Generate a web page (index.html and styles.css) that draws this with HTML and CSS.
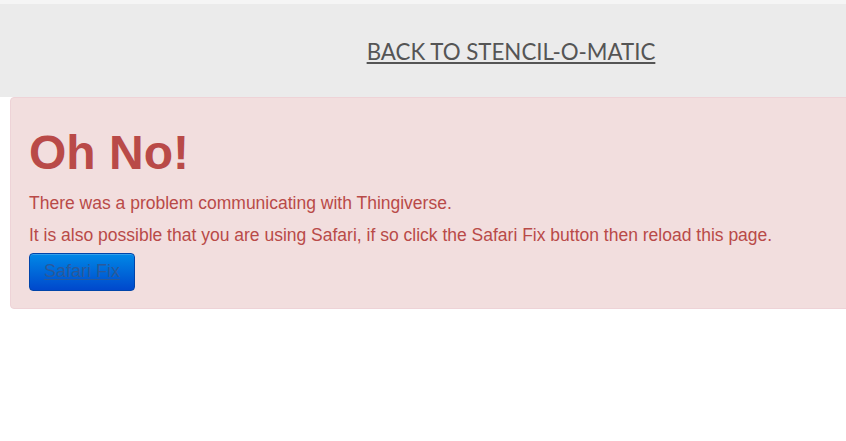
FILE: index.html
```html
<!DOCTYPE html>
<html lang="en">
<head>
    <meta charset="UTF-8">
    <meta name="viewport" content="width=device-width, initial-scale=1.0">
    <title>Stencil-o-matic</title>
    <link rel="stylesheet" href="styles.css">
</head>
<body>
    <div id="page">
        <div id="top-nav">
            <a href="#" class="back-link">BACK TO STENCIL-O-MATIC</a>
        </div>

        <div class="alert alert-error">
            <h1>Oh No!</h1>
            <p>There was a problem communicating with Thingiverse.</p>
            <p>It is also possible that you are using Safari, if so click the Safari Fix button then reload this page.</p>
            <button class="btn-primary"><a href="#">Safari Fix</a></button>
        </div>
    </div>
</body>
</html>
```

FILE: styles.css
```css
body, html {
    margin: 0;
    padding: 0;
    overflow: hidden;
    background-color: white;
}
#page {
    width: 1022px;
}
#top-nav {
    background-color: #ebebeb;
    border-top: 4px solid #f5f5f5;
    height: 93px;
    display: flex;
    align-items: center;
    justify-content: center;
}
.back-link {
    font-family: Lato, sans-serif;
    font-size: 22.3px;
    color: #555555;
    text-decoration: underline;
    padding-top: 2px;
}
.alert {
    background-color: #f2dede;
    border: 1px solid #eed3d7;
    border-radius: 4px;
    color: #b94a48;
    margin-left: 10px;
    padding: 14px 18px 17px 18px;
    font-family: "Liberation Sans", Arial, sans-serif;
}
.alert h1 {
    margin: 11px 0 8px 0;
    font-size: 48px;
    line-height: 60px;
    font-weight: bold;
}
.alert p {
    margin: 0 0 8px 0;
    font-size: 17.5px;
    line-height: 24px;
}
.alert p:last-of-type {
    margin-bottom: 6px;
}
.btn-primary {
    display: block;
    width: 106px;
    height: 38px;
    border: 1px solid #0044aa;
    border-radius: 4px;
    background: linear-gradient(#0088e6, #0048cc);
    box-shadow: inset 0 1px 0 rgba(255, 255, 255, 0.2);
    font-family: "Liberation Sans", Arial, sans-serif;
    font-size: 18px;
    padding: 0 0 2px 0;
}
.btn-primary a {
    color: #2a5a9a;
    text-decoration: underline;
    text-decoration-thickness: 1px;
    text-underline-offset: 2px;
}
```
